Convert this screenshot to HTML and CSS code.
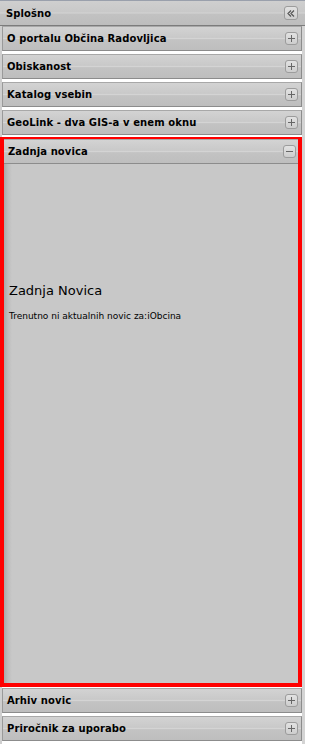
FILE: index.html
```html
<!DOCTYPE html>
<html>
<head>
<meta charset="utf-8">
<link rel="stylesheet" href="styles.css">
</head>
<body>
<div class="sidebar">
  <div class="top-head">
    <span class="title">Splošno</span>
    <span class="btn"><svg width="8" height="7" viewBox="0 0 8 7"><path d="M4 0.5 L1 3.5 L4 6.5 M7 0.5 L4 3.5 L7 6.5" fill="none" stroke="#555" stroke-width="1.2"/></svg></span>
  </div>
  <div class="panel"><div class="head"><span class="title">O portalu Občina Radovljica</span><span class="btn plus"></span></div></div>
  <div class="panel"><div class="head"><span class="title">Obiskanost</span><span class="btn plus"></span></div></div>
  <div class="panel"><div class="head"><span class="title">Katalog vsebin</span><span class="btn plus"></span></div></div>
  <div class="panel"><div class="head"><span class="title">GeoLink - dva GIS-a v enem oknu</span><span class="btn plus"></span></div></div>
  <div class="panel active">
    <div class="head"><span class="title">Zadnja novica</span><span class="btn minus"></span></div>
    <div class="body">
      <h2>Zadnja Novica</h2>
      <p>Trenutno ni aktualnih novic za:iObcina</p>
    </div>
  </div>
  <div class="panel"><div class="head"><span class="title">Arhiv novic</span><span class="btn plus"></span></div></div>
  <div class="panel"><div class="head"><span class="title">Priročnik za uporabo</span><span class="btn plus"></span></div></div>
</div>
</body>
</html>
```
FILE: styles.css
```css
html, body { margin: 0; padding: 0; background: #ffffff; }
.sidebar {
  width: 305px;
  height: 744px;
  background: #ffffff;
  font-family: "DejaVu Sans", Verdana, sans-serif;
  display: flex;
  flex-direction: column;
  border-left: 2px solid #cfcfcf;
  border-right: 3px solid #d4d4d4;
  box-sizing: border-box;
}
.top-head {
  margin: 0 -3px 0 -2px;
  height: 26px;
  box-sizing: border-box;
  border-top: 1px solid #9aa0ac;
  border-bottom: 1px solid #7c7c7c;
  background: linear-gradient(#cfcfcf, #c9c9c9 45%, #d2d2d2 50%, #c2c2c2 55%, #bdbdbd);
  display: flex;
  align-items: center;
  justify-content: space-between;
  padding: 0 7px 0 6px;
}
.title { font-weight: bold; font-size: 10px; color: #000; letter-spacing: 0.1px; }
.panel { margin-bottom: 3px; }
.head {
  height: 25px;
  box-sizing: border-box;
  border: 1px solid #8c8c8c;
  border-top-color: #a8a8a8;
  border-left-color: #9a9a9a;
  background: linear-gradient(#d3d3d3, #c9c9c9 45%, #d4d4d4 50%, #c3c3c3 55%, #bebebe);
  display: flex;
  align-items: center;
  justify-content: space-between;
  padding: 0 3px 0 4px;
}
.btn {
  width: 13px;
  height: 13px;
  box-sizing: border-box;
  border: 1px solid #9c9c9c;
  border-radius: 3px;
  background: linear-gradient(#e2e2e2, #cdcdcd);
  display: flex;
  align-items: center;
  justify-content: center;
  position: relative;
}
.plus::before, .minus::before {
  content: "";
  position: absolute;
  left: 2px; top: 5px;
  width: 7px; height: 1px;
  background: #666;
}
.plus::after {
  content: "";
  position: absolute;
  left: 5px; top: 2px;
  width: 1px; height: 7px;
  background: #666;
}
.top-head .btn { width: 14px; height: 14px; }
.active {
  margin: -1px 0 1px -2px;
  border: 4px solid #ff0000;
  width: 302px;
  box-sizing: border-box;
  flex: 1;
  display: flex;
  flex-direction: column;
}
.active .head { border-left: none; border-right: none; height: 23px; padding-right: 2px; margin-top: -2px; height: 25px; }
.body {
  flex: 1;
  background: linear-gradient(to right, #a9a9a9, #bdbdbd 4px, #c8c8c8 8px, #c8c8c8);
  padding: 119px 0 0 5px;
}
.body h2 { margin: 0; font-size: 13px; font-weight: normal; color: #000; }
.body p { margin: 13px 0 0; font-size: 9px; color: #000; }
```
